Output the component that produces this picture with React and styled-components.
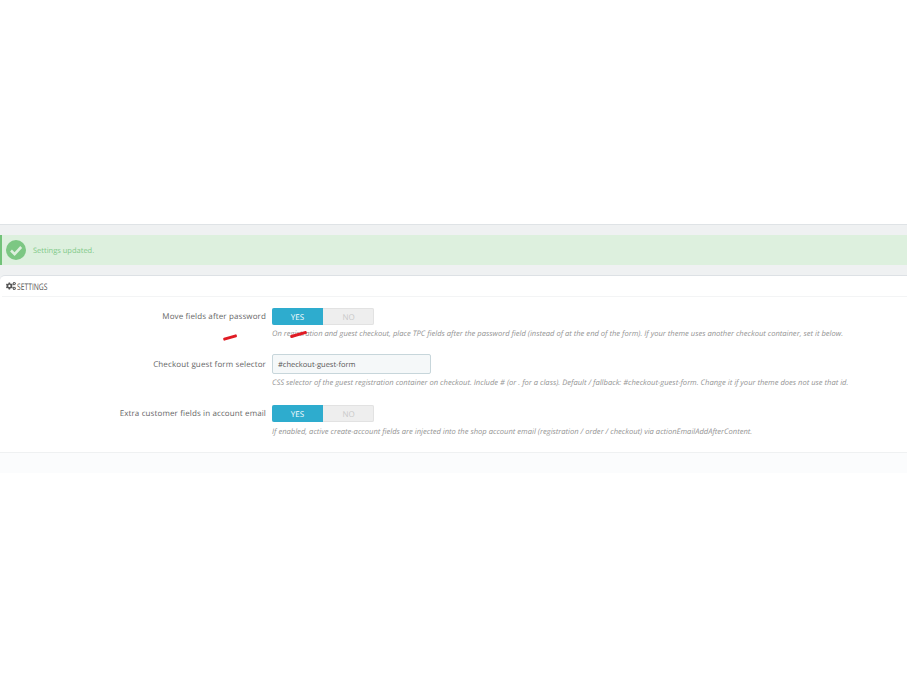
import React from 'react';
import styled, {createGlobalStyle} from 'styled-components';
import {FaCogs} from 'react-icons/fa';

const GlobalStyle = createGlobalStyle`
  html, body {
    margin: 0;
    padding: 0;
    background: #fff;
    font-family: "Open Sans", "Liberation Sans", sans-serif;
    text-rendering: geometricPrecision;
  }
`;

const Page = styled.div`
  position: relative;
  height: 693px;
  padding-top: 224px;
  box-sizing: border-box;
  overflow: hidden;
`;
const Content = styled.div`
  background: #eff1f2;
  border-top: 1px solid #dfe3e6;
  padding: 10px 0 0 0;
`;
const Alert = styled.div`
  display: flex;
  align-items: center;
  height: 30px;
  background: #ddf0de;
  border-left: 2px solid #72c279;
  padding-left: 4px;
  gap: 7px;
  color: #80c987;
  font-size: 7.5px;
`;
const AlertText = styled.span`
  padding-top: 1px;
`;
const Panel = styled.div`
  margin-top: 10px;
  background: #fff;
  border-top: 1px solid #dde1e5;
  border-radius: 5px 0 0 0;
`;
const PanelHeading = styled.div`
  display: flex;
  align-items: center;
  gap: 1px;
  height: 20px;
  padding-left: 4px;
  margin-left: 2px;
  border-bottom: 1px solid #f3f4f5;
  color: #555;
  font-size: 9px;
  text-transform: uppercase;
`;
const HeadingText = styled.span`
  display: inline-block;
  transform: scaleX(0.75);
  transform-origin: left center;
`;
const Form = styled.div`
  display: flex;
  flex-direction: column;
  padding-top: 11px;
`;
const Row = styled.div`
  display: grid;
  grid-template-columns: 266px 1fr;
  column-gap: 6px;
  margin-bottom: ${(props) => props.$gap}px;
`;
const Label = styled.div`
  justify-self: end;
  height: ${(props) => (props.$tall ? 22 : 18)}px;
  line-height: ${(props) => (props.$tall ? 22 : 18)}px;
  color: #666;
  font-size: 8px;
  letter-spacing: 0.12px;
  white-space: nowrap;
`;
const Field = styled.div`
  display: flex;
  flex-direction: column;
`;
const Switch = styled.div`
  display: flex;
  width: 102px;
  height: 17px;
  border-radius: 2px;
  overflow: hidden;
  background: #eee;
  box-shadow: inset 0 0 0 1px #e2e2e2;
`;
const SwitchOption = styled.div`
  flex: 1;
  display: flex;
  align-items: center;
  justify-content: center;
  padding-top: 1px;
  font-size: 8px;
  background: ${(props) => (props.$on ? '#2eacce' : 'transparent')};
  color: ${(props) => (props.$on ? '#fff' : '#c9c9c9')};
`;
const Input = styled.div`
  box-sizing: border-box;
  display: flex;
  align-items: center;
  width: 159px;
  height: 20px;
  padding: 1px 0 0 5px;
  background: #f5f8f9;
  border: 1px solid #c7d6db;
  border-radius: 2px;
  color: #555;
  font-size: 7.5px;
`;
const Help = styled.div`
  margin-top: ${(props) => props.$top}px;
  color: #959595;
  font-size: 7.59px;
  line-height: 11px;
  font-style: italic;
  white-space: nowrap;
`;
const Footer = styled.div`
  height: 20px;
  margin-top: 14px;
  background: #fbfcfd;
  border-top: 1px solid #eff1f2;
`;
const Mark = styled.div`
  position: absolute;
  left: ${(props) => props.$x}px;
  top: ${(props) => props.$y}px;
  width: ${(props) => props.$w}px;
  height: 2.5px;
  border-radius: 1px;
  background: #e01b24;
  transform: rotate(-16deg);
`;

const CheckIcon = () => (
  <svg width="20" height="20" viewBox="0 0 20 20">
    <circle cx="10" cy="10" r="10" fill="#7cc783" />
    <path d="M5 10.5l3.6 3.6L15.2 7" fill="none" stroke="#ddf0de" strokeWidth="2.6" />
  </svg>
);

const SwitchField = () => (
  <Switch>
    <SwitchOption $on>YES</SwitchOption>
    <SwitchOption>NO</SwitchOption>
  </Switch>
);

const App = () => {
  return (
    <Page>
      <GlobalStyle />
      <Content>
        <Alert>
          <CheckIcon />
          <AlertText>Settings updated.</AlertText>
        </Alert>
        <Panel>
          <PanelHeading>
            <FaCogs size={10} />
            <HeadingText>Settings</HeadingText>
          </PanelHeading>
          <Form>
            <Row $gap={14}>
              <Label>Move fields after password</Label>
              <Field>
                <SwitchField />
                <Help $top={4}>
                  On registration and guest checkout, place TPC fields after the password field (instead of at the end of the form). If your theme uses another checkout container, set it below.
                </Help>
              </Field>
            </Row>
            <Row $gap={16}>
              <Label $tall>Checkout guest form selector</Label>
              <Field>
                <Input>#checkout-guest-form</Input>
                <Help $top={4}>
                  CSS selector of the guest registration container on checkout. Include # (or . for a class). Default / fallback: #checkout-guest-form. Change it if your theme does not use that id.
                </Help>
              </Field>
            </Row>
            <Row $gap={0}>
              <Label>Extra customer fields in account email</Label>
              <Field>
                <SwitchField />
                <Help $top={5}>
                  If enabled, active create-account fields are injected into the shop account email (registration / order / checkout) via actionEmailAddAfterContent.
                </Help>
              </Field>
            </Row>
          </Form>
          <Footer />
        </Panel>
      </Content>
      <Mark $x={223} $y={336} $w={14} />
      <Mark $x={290} $y={333} $w={17} />
    </Page>
  )
}

export default App;
